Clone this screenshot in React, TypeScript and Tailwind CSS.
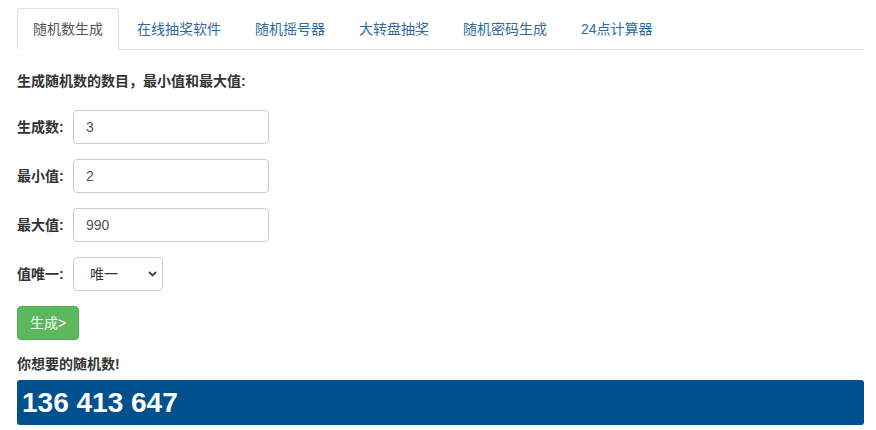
const tabs = ["随机数生成", "在线抽奖软件", "随机摇号器", "大转盘抽奖", "随机密码生成", "24点计算器"];

const fields = [
  { label: "生成数:", value: "3" },
  { label: "最小值:", value: "2" },
  { label: "最大值:", value: "990" },
];

function App() {
  return (
    <div
      className="min-h-[430px] bg-white pl-[17px] pr-[12px] pt-2 text-[14px] text-[#333]"
      style={{ fontFamily: '"Liberation Sans", "Noto Sans CJK SC", sans-serif' }}
    >
      <ul className="flex border-b border-[#ddd]">
        {tabs.map((t, i) => (
          <li key={t} className="-mb-px mr-[2px]">
            <a
              className={
                i === 0
                  ? "block rounded-t-[4px] border border-[#ddd] border-b-transparent bg-white px-[15px] py-[10px] leading-[20px] text-[#555]"
                  : "block rounded-t-[4px] border border-transparent px-[15px] py-[10px] leading-[20px] text-[#2f6aa3]"
              }
            >
              {t}
            </a>
          </li>
        ))}
      </ul>

      <p className="mt-[21px] font-bold leading-[20px]">生成随机数的数目，最小值和最大值:</p>

      <div className="mt-[19px] flex flex-col gap-[15px]">
        {fields.map((f) => (
          <div key={f.label} className="flex items-center">
            <label className="w-[56px] font-bold">{f.label}</label>
            <input
              defaultValue={f.value}
              className="h-[34px] w-[196px] rounded-[4px] border border-[#ccc] px-[12px] text-[#555] outline-none"
            />
          </div>
        ))}
        <div className="flex items-center">
          <label className="w-[56px] font-bold">值唯一:</label>
          <div className="relative">
            <select className="h-[34px] w-[90px] appearance-none rounded-[4px] border border-[#ccc] bg-white pl-[16px] text-[#333] outline-none">
              <option>唯一</option>
            </select>
            <svg
              className="pointer-events-none absolute right-[6px] top-[14px]"
              width="9"
              height="6"
              viewBox="0 0 9 6"
            >
              <path d="M1 1l3.5 3.5L8 1" fill="none" stroke="#444" strokeWidth="1.8" />
            </svg>
          </div>
        </div>
        <div>
          <button className="h-[34px] rounded-[4px] border border-[#4cae4c] bg-[#5cb85c] px-[12px] leading-[20px] text-white">
            生成&gt;
          </button>
        </div>
      </div>

      <p className="mt-[14px] mb-[6px] font-bold leading-[20px]">你想要的随机数!</p>
      <div className="flex h-[45px] items-center rounded-[3px] bg-[#01518f] pl-[5px] text-[28px] font-bold text-white">
        136 413 647
      </div>
    </div>
  );
}

export default App;
